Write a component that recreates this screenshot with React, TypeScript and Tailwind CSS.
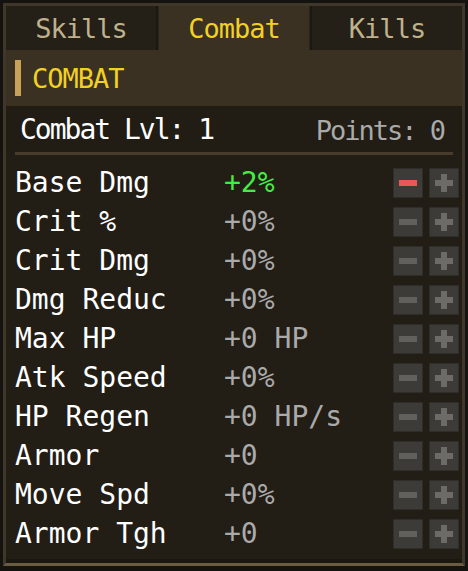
import React, { useState } from 'react';

type Stat = { label: string; value: string; invested: boolean };

const STATS: Stat[] = [
    { label: 'Base Dmg', value: '+2%', invested: true },
    { label: 'Crit %', value: '+0%', invested: false },
    { label: 'Crit Dmg', value: '+0%', invested: false },
    { label: 'Dmg Reduc', value: '+0%', invested: false },
    { label: 'Max HP', value: '+0 HP', invested: false },
    { label: 'Atk Speed', value: '+0%', invested: false },
    { label: 'HP Regen', value: '+0 HP/s', invested: false },
    { label: 'Armor', value: '+0', invested: false },
    { label: 'Move Spd', value: '+0%', invested: false },
    { label: 'Armor Tgh', value: '+0', invested: false },
];

const TABS = ['Skills', 'Combat', 'Kills'];

const MinusIcon: React.FC<{ color: string }> = ({ color }) => (
    <svg width="18" height="6" viewBox="0 0 18 6">
        <rect x="0" y="0" width="18" height="6" fill={color} />
    </svg>
);

const PlusIcon: React.FC<{ color: string }> = ({ color }) => (
    <svg width="18" height="18" viewBox="0 0 18 18">
        <rect x="6" y="0" width="6" height="18" fill={color} />
        <rect x="0" y="6" width="18" height="6" fill={color} />
    </svg>
);

const StatButton: React.FC<{ children: React.ReactNode }> = ({ children }) => (
    <button className="w-[30px] h-[30px] flex items-center justify-center bg-[#3c3b38] border border-[#2e2d2a]">
        {children}
    </button>
);

export default function App() {
    const [tab, setTab] = useState('Combat');

    return (
        <div className="w-[468px] h-[571px] bg-[#15130f] p-[3px] pb-[5px] font-['DejaVu_Sans_Mono',monospace] leading-none">
            <div className="h-full flex flex-col border-[3px] border-[#3f3729] border-b-[#6a5c40] bg-[#221d15]">
                {/* Tabs */}
                <div className="h-[44px] flex gap-[2px] bg-[#1b1712]">
                    {TABS.map(t => (
                        <button
                            key={t}
                            onClick={() => setTab(t)}
                            className={`flex-1 flex items-center justify-center text-[27px] tracking-[-1px] ${
                                t === tab
                                    ? 'bg-[#3a3122] text-[#f2d024] border-x border-[#2b2419]'
                                    : 'bg-[#241f17] text-[#bfb18c]'
                            }`}
                        >
                            {t}
                        </button>
                    ))}
                </div>

                {/* Section header */}
                <div className="h-[56px] flex items-center gap-[11px] pl-[9px] bg-[#3a3122]">
                    <div className="w-[6px] h-[36px] bg-[#c7a257]" />
                    <span className="text-[27px] tracking-[-1px] text-[#f2d024]">COMBAT</span>
                </div>

                {/* Level / points */}
                <div className="h-[46px] flex items-center justify-between pl-[14px] pr-[18px] pt-[2px] bg-[#211c14]">
                    <span className="text-[28px] tracking-[-2px] text-white">Combat Lvl: 1</span>
                    <span className="text-[27px] tracking-[-2px] text-[#aaaaaa]">Points: 0</span>
                </div>
                <div className="h-[3px] mx-[9px] bg-[#483d2c]" />

                {/* Stat rows */}
                <div className="flex-1 flex flex-col pt-[8px] border-b-[4px] border-[#1a1610]">
                    {STATS.map(s => (
                        <div key={s.label} className="h-[39px] flex items-center pl-[9px] pr-[3px]">
                            <span className="w-[209px] text-[28px] text-white whitespace-nowrap">{s.label}</span>
                            <span
                                className={`text-[28px] whitespace-nowrap ${
                                    s.invested ? 'text-[#45ec45]' : 'text-[#aaaaaa]'
                                }`}
                            >
                                {s.value}
                            </span>
                            <div className="ml-auto flex gap-[6px]">
                                <StatButton>
                                    <MinusIcon color={s.invested ? '#ec5656' : '#61605d'} />
                                </StatButton>
                                <StatButton>
                                    <PlusIcon color="#6c6b68" />
                                </StatButton>
                            </div>
                        </div>
                    ))}
                </div>
            </div>
        </div>
    );
}
